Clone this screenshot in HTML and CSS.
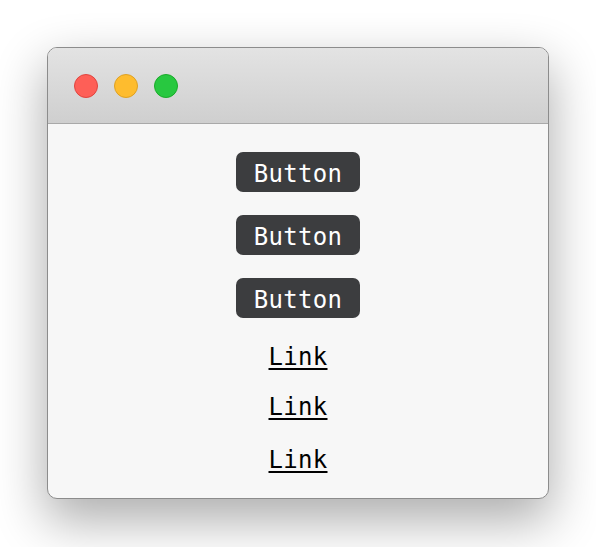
FILE: index.html
```html
<!DOCTYPE html>
<html>
<head>
<meta charset="utf-8">
<link rel="stylesheet" href="styles.css">
</head>
<body>
<div class="window">
  <div class="titlebar">
    <span class="light red"></span>
    <span class="light yellow"></span>
    <span class="light green"></span>
  </div>
  <div class="content">
    <button class="btn">Button</button>
    <button class="btn">Button</button>
    <button class="btn">Button</button>
    <a class="link link-1" href="#">Link</a>
    <a class="link link-2" href="#">Link</a>
    <a class="link link-3" href="#">Link</a>
  </div>
</div>
</body>
</html>
```
FILE: styles.css
```css
html, body {
  margin: 0;
  padding: 0;
  background: #ffffff;
}
body {
  padding: 47px 47px 0 47px;
  min-height: 547px;
  box-sizing: border-box;
  font-family: "DejaVu Sans Mono", monospace;
}
.window {
  width: 502px;
  height: 452px;
  box-sizing: border-box;
  border: 1px solid #8c8c8c;
  border-radius: 10px;
  overflow: hidden;
  background: #f7f7f7;
  box-shadow: 0 20px 50px 2px rgba(0, 0, 0, 0.32);
  display: flex;
  flex-direction: column;
}
.titlebar {
  height: 76px;
  flex: none;
  box-sizing: border-box;
  border-bottom: 1px solid #a9a9a9;
  background: linear-gradient(#e3e3e3, #cfcfcf);
  display: flex;
  align-items: center;
  gap: 16px;
  padding-left: 26px;
}
.light {
  width: 24px;
  height: 24px;
  border-radius: 50%;
  box-sizing: border-box;
}
.red { background: #fe5f57; border: 1px solid #e0443e; }
.yellow { background: #febc2e; border: 1px solid #dea123; }
.green { background: #28c840; border: 1px solid #1aab29; }
.content {
  display: flex;
  flex-direction: column;
  align-items: center;
  padding-top: 28px;
}
.btn {
  width: 124px;
  height: 40px;
  border: none;
  border-radius: 7px;
  background: #3c3d3f;
  color: #ffffff;
  font-family: "DejaVu Sans Mono", monospace;
  font-size: 24px;
  letter-spacing: 0.3px;
  padding: 3px 0 0 0;
  margin-bottom: 23px;
}
.link {
  color: #000000;
  font-size: 24px;
  line-height: 28px;
  letter-spacing: 0.3px;
  text-decoration: underline;
  text-decoration-thickness: 2px;
  text-underline-offset: 3px;
}
.link-1 { margin-top: 2px; }
.link-2 { margin-top: 22px; }
.link-3 { margin-top: 25px; }
```
